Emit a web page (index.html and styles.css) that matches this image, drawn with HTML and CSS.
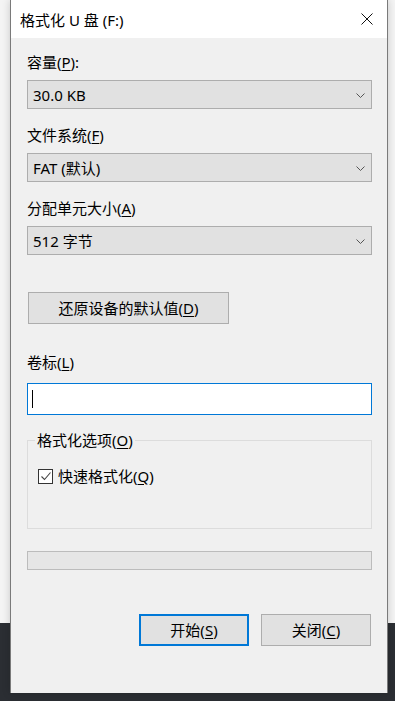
FILE: index.html
```html
<!DOCTYPE html>
<html lang="zh-CN">
<head>
    <meta charset="UTF-8">
    <meta name="viewport" content="width=device-width, initial-scale=1.0">
    <title>格式化 U 盘 (F:)</title>
    <link rel="stylesheet" href="styles.css">
</head>
<body>
    <div class="desk">
        <div class="desk-top"></div>
        <div class="desk-bottom"></div>
    </div>

    <div class="window">
        <div class="titlebar">
            <span class="title">格式化 U 盘 (F:)</span>
            <span class="close">
                <svg width="12" height="12" viewBox="0 0 12 12"><path d="M0.5 0.5L11.5 11.5M11.5 0.5L0.5 11.5" stroke="#111" stroke-width="1" fill="none"/></svg>
            </span>
        </div>

        <div class="content">
            <div class="label first">容量(<u>P</u>):</div>
            <div class="combo">
                <span>30.0 KB</span>
                <svg class="chev" width="9" height="5" viewBox="0 0 9 5"><path d="M0.5 0.5L4.5 4.5L8.5 0.5" stroke="#555" stroke-width="1" fill="none"/></svg>
            </div>

            <div class="label">文件系统(<u>F</u>)</div>
            <div class="combo">
                <span>FAT (默认)</span>
                <svg class="chev" width="9" height="5" viewBox="0 0 9 5"><path d="M0.5 0.5L4.5 4.5L8.5 0.5" stroke="#555" stroke-width="1" fill="none"/></svg>
            </div>

            <div class="label">分配单元大小(<u>A</u>)</div>
            <div class="combo">
                <span>512 字节</span>
                <svg class="chev" width="9" height="5" viewBox="0 0 9 5"><path d="M0.5 0.5L4.5 4.5L8.5 0.5" stroke="#555" stroke-width="1" fill="none"/></svg>
            </div>

            <button class="btn restore">还原设备的默认值(<u>D</u>)</button>

            <div class="label volume">卷标(<u>L</u>)</div>
            <div class="textbox"><span class="caret"></span></div>

            <fieldset class="group">
                <legend>格式化选项(<u>O</u>)</legend>
                <div class="check-row">
                    <span class="checkbox">
                        <svg width="12" height="12" viewBox="0 0 12 12"><path d="M1.5 6.5L4.5 9.5L10.5 2.5" stroke="#444" stroke-width="1.1" fill="none"/></svg>
                    </span>
                    <span>快速格式化(<u>Q</u>)</span>
                </div>
            </fieldset>

            <div class="progress"></div>

            <div class="actions">
                <button class="btn primary">开始(<u>S</u>)</button>
                <button class="btn">关闭(<u>C</u>)</button>
            </div>
        </div>
    </div>
</body>
</html>
```

FILE: styles.css
```css
body {
    margin: 0;
    font-family: "Noto Sans", "Noto Sans CJK SC", sans-serif;
    font-size: 15px;
    color: #000;
    overflow: hidden;
}
.desk {
    width: 395px;
    height: 701px;
    display: flex;
    flex-direction: column;
}
.desk-top {
    height: 623px;
    background: #f4f4f4;
}
.desk-bottom {
    flex: 1;
    background: #2b2e33;
}

/* dialog window sitting over the desktop */
.window {
    position: absolute;
    left: 10px;
    top: 0;
    width: 376px;
    height: 693px;
    border-left: 1px solid #7a7a7a;
    border-right: 1px solid #7a7a7a;
    background: #f0f0f0;
    box-shadow: 0 0 8px rgba(0,0,0,0.18);
}
.titlebar {
    height: 38px;
    background: #fff;
    display: flex;
    align-items: center;
    justify-content: space-between;
    padding: 0 14px 0 9px;
}
.title {
    line-height: 20px;
    margin-top: 1px;
}
.close {
    display: flex;
    margin-top: -1px;
}

.content {
    padding: 0 15px 0 16px;
    display: flex;
    flex-direction: column;
}
.label {
    line-height: 20px;
    margin-top: 16px;
}
.label.first { margin-top: 14px; }
u { text-underline-offset: 2px; }

.combo {
    margin-top: 8px;
    height: 29px;
    box-sizing: border-box;
    border: 1px solid #adadad;
    background: #e1e1e1;
    display: flex;
    align-items: center;
    justify-content: space-between;
    padding: 0 6px 0 5px;
    line-height: 20px;
}
.combo + .label { margin-top: 16px; }
.chev { margin-top: 1px; }

.btn {
    font: inherit;
    color: #000;
    height: 32px;
    width: 110px;
    box-sizing: border-box;
    border: 1px solid #adadad;
    background: #e1e1e1;
    padding: 0;
    line-height: 20px;
}
.btn.restore {
    width: 201px;
    margin-top: 37px;
    margin-left: 1px;
}
.btn.primary {
    border: 2px solid #0078d7;
}

.label.volume { margin-top: 28px; }
.textbox {
    margin-top: 11px;
    height: 32px;
    box-sizing: border-box;
    border: 1px solid #0078d7;
    background: #fff;
    display: flex;
    align-items: center;
    padding-left: 4px;
}
.caret {
    width: 1px;
    height: 18px;
    background: #000;
}

.group {
    margin: 15px 0 0;
    padding: 0;
    height: 99px;
    box-sizing: border-box;
    border: 1px solid #dcdcdc;
}
.group legend {
    margin-left: 7px;
    padding: 0 2px;
    line-height: 20px;
}
.check-row {
    display: flex;
    align-items: center;
    gap: 5px;
    margin: 16px 0 0 10px;
    line-height: 20px;
}
.checkbox {
    width: 15px;
    height: 15px;
    box-sizing: border-box;
    border: 1px solid #333;
    background: #fff;
    display: flex;
    align-items: center;
    justify-content: center;
}

.progress {
    margin-top: 22px;
    height: 19px;
    box-sizing: border-box;
    border: 1px solid #bcbcbc;
    background: #e6e6e6;
}

.actions {
    margin-top: 44px;
    display: flex;
    justify-content: flex-end;
    gap: 12px;
    padding-right: 1px;
}
```
